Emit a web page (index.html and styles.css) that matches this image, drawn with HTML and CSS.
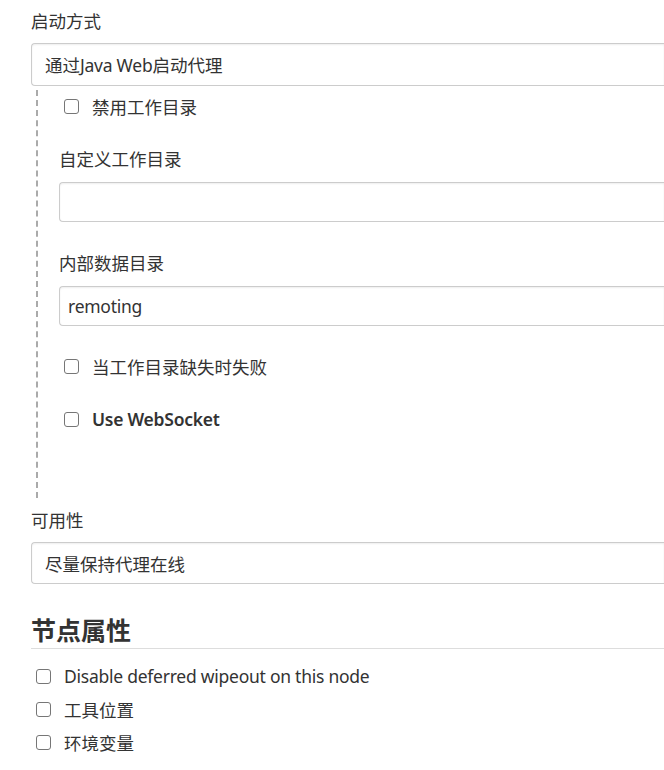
FILE: index.html
```html
<!DOCTYPE html>
<html lang="zh-CN">
<head>
<meta charset="utf-8">
<title>节点配置</title>
<link rel="stylesheet" href="styles.css">
</head>
<body>
<div class="page">
  <div class="field-label">启动方式</div>
  <div class="select">通过<span class="latin">Java Web</span>启动代理</div>

  <div class="nested">
    <label class="check-row check-row--nested"><input type="checkbox" class="cb"><span>禁用工作目录</span></label>

    <div class="field-label field-label--sub">自定义工作目录</div>
    <div class="textbox"></div>

    <div class="field-label field-label--sub">内部数据目录</div>
    <div class="textbox"><span class="latin">remoting</span></div>

    <label class="check-row check-row--nested check-row--gap"><input type="checkbox" class="cb"><span>当工作目录缺失时失败</span></label>
    <label class="check-row check-row--nested check-row--gap"><input type="checkbox" class="cb"><span class="latin strong">Use WebSocket</span></label>
  </div>

  <div class="field-label field-label--after">可用性</div>
  <div class="select select--short">尽量保持代理在线</div>

  <h2 class="section-title">节点属性</h2>

  <div class="props">
    <label class="check-row check-row--prop"><input type="checkbox" class="cb"><span class="latin">Disable deferred wipeout on this node</span></label>
    <label class="check-row check-row--prop"><input type="checkbox" class="cb"><span>工具位置</span></label>
    <label class="check-row check-row--prop"><input type="checkbox" class="cb"><span>环境变量</span></label>
  </div>
</div>
</body>
</html>
```

FILE: styles.css
```css
html, body {
  margin: 0;
  padding: 0;
  background: #ffffff;
}

body {
  font-family: "Noto Sans", "Noto Sans CJK SC", sans-serif;
  font-size: 17.5px;
  color: #333333;
  overflow: hidden;
}

.page {
  box-sizing: border-box;
  width: 100%;
  padding: 9px 0 0 31px;
  display: flex;
  flex-direction: column;
}

.latin {
  letter-spacing: -0.25px;
}

.field-label {
  line-height: 24px;
  height: 24px;
  margin-bottom: 10px;
}

.field-label--sub {
  margin-top: 29px;
  margin-bottom: 11px;
}

.field-label--after {
  margin-top: 10px;
  margin-bottom: 10px;
}

.select,
.textbox {
  box-sizing: border-box;
  border: 1px solid #cccccc;
  border-right: none;
  border-radius: 4px 0 0 4px;
  box-shadow: inset 0 1px 2px rgba(0, 0, 0, 0.07);
  background: #ffffff;
  display: flex;
  align-items: center;
  color: #333333;
  white-space: nowrap;
  overflow: hidden;
}

.select {
  height: 43px;
  padding-left: 13px;
}

.select--short {
  height: 42px;
}

.textbox {
  height: 40px;
  padding-left: 8px;
}

.nested {
  margin-top: 4px;
  margin-left: 5px;
  border-left: 2px dashed #aaaaaa;
  padding: 4px 0 67px 21px;
  display: flex;
  flex-direction: column;
}

.check-row {
  display: flex;
  align-items: center;
  height: 24px;
  gap: 13px;
  cursor: pointer;
}

.check-row--nested {
  padding-left: 5px;
}

.check-row--gap {
  margin-top: 28px;
}

.check-row--gap + .check-row--gap {
  margin-top: 29px;
}

.cb {
  appearance: none;
  -webkit-appearance: none;
  margin: 0;
  width: 15px;
  height: 15px;
  box-sizing: border-box;
  border: 1px solid #767676;
  border-radius: 3px;
  background: #ffffff;
  flex: none;
}

.strong {
  font-weight: 600;
}

.section-title {
  margin: 30px 0 0 0;
  font-size: 25px;
  font-weight: 700;
  line-height: 32px;
  padding-bottom: 2px;
  border-bottom: 1px solid #dddddd;
  color: #333333;
}

.props {
  display: flex;
  flex-direction: column;
  gap: 9px;
  padding-top: 15px;
}

.check-row--prop {
  padding-left: 5px;
}
```
